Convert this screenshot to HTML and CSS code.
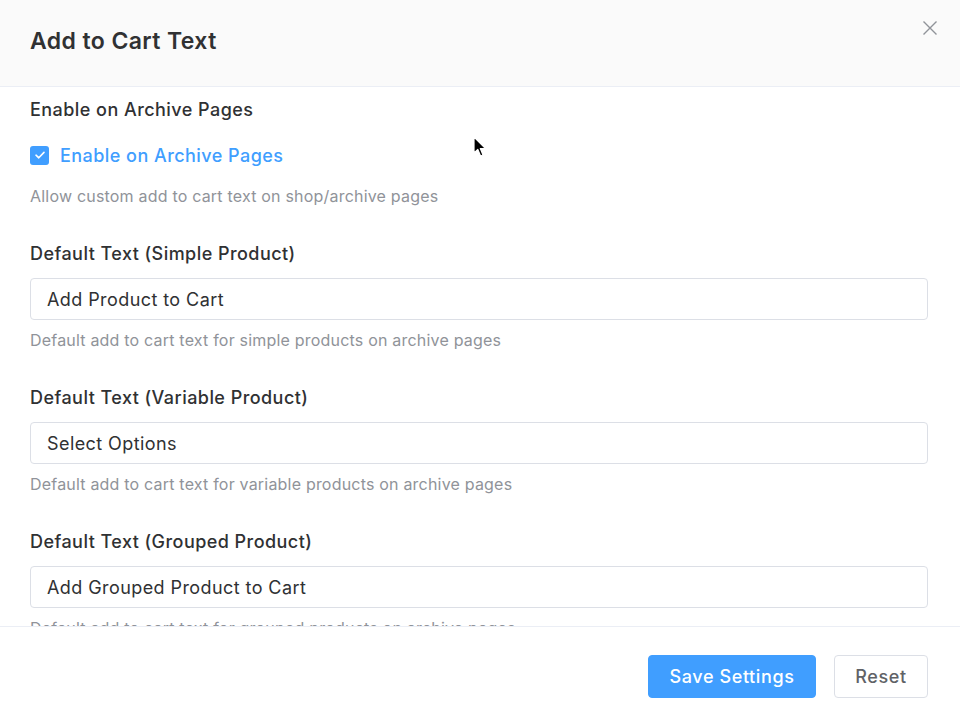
FILE: index.html
```html
<!DOCTYPE html>
<html>
<head>
<meta charset="utf-8">
<link rel="stylesheet" href="styles.css">
</head>
<body>
<div class="dialog">
  <header class="dialog-header">
    <h1 class="dialog-title">Add to Cart Text</h1>
    <button class="close-btn" aria-label="Close">
      <svg width="16" height="16" viewBox="0 0 16 16"><path d="M1.5 1.5 L14.5 14.5 M14.5 1.5 L1.5 14.5" stroke="#909399" stroke-width="1.4" fill="none"/></svg>
    </button>
  </header>
  <main class="dialog-body">
    <section class="field field-first">
      <div class="field-label">Enable on Archive Pages</div>
      <label class="checkbox-row">
        <span class="checkbox">
          <svg width="12" height="10" viewBox="0 0 12 10"><path d="M2 5.2 L4.8 7.8 L10 2.4" stroke="#fff" stroke-width="1.6" fill="none" stroke-linecap="round" stroke-linejoin="round"/></svg>
        </span>
        <span class="checkbox-text">Enable on Archive Pages</span>
      </label>
      <div class="help">Allow custom add to cart text on shop/archive pages</div>
    </section>
    <section class="field">
      <div class="field-label">Default Text (Simple Product)</div>
      <div class="input">Add Product to Cart</div>
      <div class="help">Default add to cart text for simple products on archive pages</div>
    </section>
    <section class="field">
      <div class="field-label">Default Text (Variable Product)</div>
      <div class="input">Select Options</div>
      <div class="help">Default add to cart text for variable products on archive pages</div>
    </section>
    <section class="field">
      <div class="field-label">Default Text (Grouped Product)</div>
      <div class="input">Add Grouped Product to Cart</div>
      <div class="help">Default add to cart text for grouped products on archive pages</div>
    </section>
  </main>
  <footer class="dialog-footer">
    <button class="btn btn-primary">Save Settings</button>
    <button class="btn btn-default">Reset</button>
  </footer>
  <svg class="cursor" width="14" height="22" viewBox="0 0 14 22"><path d="M1 1 L1 17 L4.8 13.4 L7.6 20 L10 19 L7.3 12.6 L12.5 12.6 Z" fill="#000" stroke="#fff" stroke-width="1.2" stroke-linejoin="round"/></svg>
</div>
</body>
</html>
```
FILE: styles.css
```css
* { box-sizing: border-box; }
html, body { margin: 0; padding: 0; }
body {
  font-family: Inter, "Noto Sans", "Liberation Sans", sans-serif;
  background: #fff;
  color: #303133;
}
.dialog {
  position: relative;
  width: 960px;
  height: 723px;
  display: flex;
  flex-direction: column;
  overflow: hidden;
}
.dialog-header {
  height: 87px;
  flex: none;
  background: #fafafa;
  border-bottom: 1px solid #ebeef5;
  display: flex;
  align-items: flex-start;
  justify-content: space-between;
  padding: 0 22px 0 30px;
}
.dialog-title {
  margin: 27px 0 0;
  font-size: 23px;
  line-height: 28px;
  font-weight: 600;
  color: #303133;
  letter-spacing: 0.4px;
}
.close-btn {
  margin-top: 20px;
  border: 0;
  background: transparent;
  padding: 0;
  width: 16px;
  height: 16px;
  cursor: pointer;
}
.close-btn svg { display: block; }
.dialog-body {
  flex: 1;
  overflow: hidden;
  padding: 11px 32px 0 30px;
}
.field { margin-bottom: 36px; }
.field-label {
  font-size: 18px;
  line-height: 24px;
  font-weight: 500;
  color: #303133;
  letter-spacing: 0.45px;
  margin-bottom: 12px;
}
.field-first .field-label { margin-bottom: 21px; }
.checkbox-row {
  display: flex;
  align-items: center;
  height: 24px;
  gap: 11px;
  margin-bottom: 19px;
}
.checkbox {
  width: 19px;
  height: 19px;
  border-radius: 3px;
  background: #409eff;
  display: flex;
  align-items: center;
  justify-content: center;
}
.checkbox-text {
  font-size: 18px;
  font-weight: 500;
  letter-spacing: 0.45px;
  color: #409eff;
}
.help {
  font-size: 16px;
  line-height: 20px;
  letter-spacing: 0.2px;
  color: #909399;
}
.input {
  height: 42px;
  border: 1px solid #dcdfe6;
  border-radius: 4px;
  padding: 0 16px;
  display: flex;
  align-items: center;
  font-size: 18px;
  letter-spacing: 0.42px;
  color: #303133;
  margin-bottom: 10px;
}
.dialog-footer {
  height: 97px;
  flex: none;
  border-top: 1px solid #ebeef5;
  display: flex;
  justify-content: flex-end;
  align-items: flex-start;
  gap: 18px;
  padding: 28px 32px 0 0;
}
.btn {
  height: 43px;
  border-radius: 4px;
  font-family: inherit;
  font-size: 18px;
  font-weight: 500;
  letter-spacing: 0.6px;
  padding: 0;
  cursor: pointer;
}
.btn-primary {
  background: #409eff;
  border: 1px solid #409eff;
  color: #fff;
  width: 168px;
}
.btn-default {
  background: #fff;
  border: 1px solid #dcdfe6;
  color: #606266;
  width: 94px;
}
.cursor {
  position: absolute;
  left: 473px;
  top: 136px;
}
```
